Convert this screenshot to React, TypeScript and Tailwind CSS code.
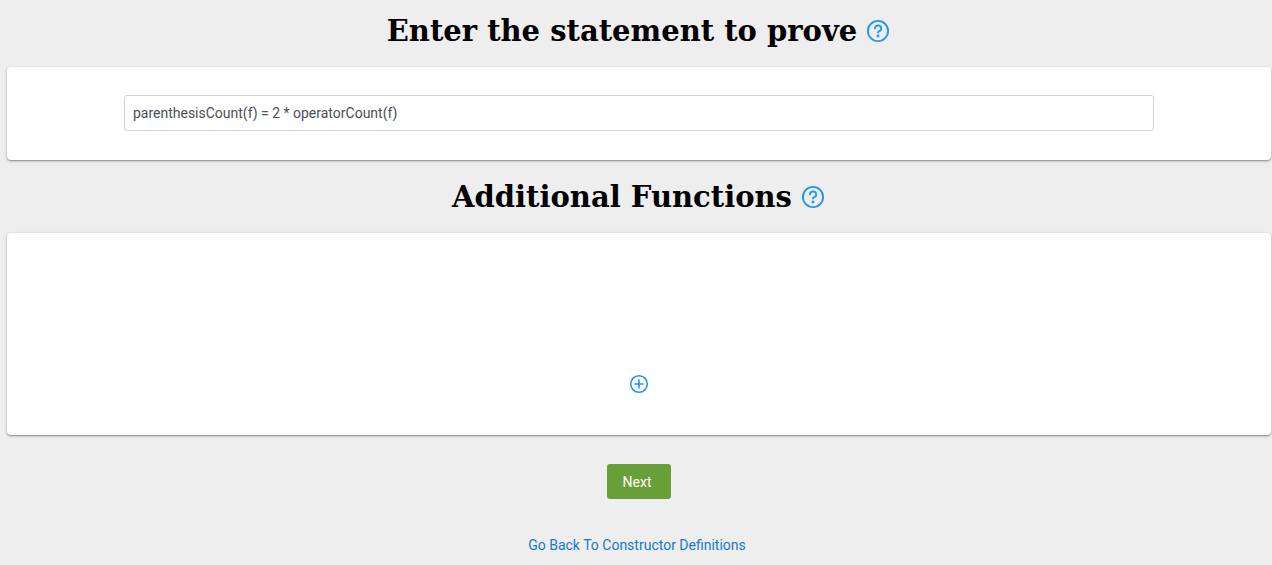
import { useState } from "react";

function HelpIcon() {
  return (
    <svg viewBox="0 0 26 26" className="size-[26px]" fill="none" stroke="#2196f3" strokeWidth="1.9" strokeLinecap="round" strokeLinejoin="round" aria-hidden="true">
      <circle cx="13" cy="13" r="10.1" />
      <path d="M10 10.400a3.100 2.900 0 1 1 4.300 2.700c-.9.400-1.300.8-1.300 1.500" />
      <circle cx="13" cy="18" r="1.400" fill="#2196f3" stroke="none" />
    </svg>
  );
}

function AddIcon() {
  return (
    <svg viewBox="0 0 22 22" className="size-[22px]" fill="none" stroke="#2196f3" strokeWidth="1.600" strokeLinecap="round" aria-hidden="true">
      <circle cx="11" cy="11" r="8.300" />
      <path d="M11 7v8M7 11h8" />
    </svg>
  );
}

function SectionHeading({ id, title }: { id: string; title: string }) {
  return (
    <div className="flex items-center justify-center gap-2">
      <h1 id={id} className="font-['DejaVu_Serif',serif] text-[29px] leading-9 font-bold text-black">
        {title}
      </h1>
      <button type="button" aria-label={`Help: ${title}`}>
        <HelpIcon />
      </button>
    </div>
  );
}

const card = "mt-[18px] flex justify-center rounded-sm bg-white shadow-[0_1px_3px_rgba(0,0,0,0.3),0_1px_1px_rgba(0,0,0,0.2)]";

export default function App() {
  const [statement, setStatement] = useState("parenthesisCount(f) = 2 * operatorCount(f)");
  return (
    <main className="min-h-screen bg-[#eeeeee] pt-[13px] pl-[7px] pr-px font-[Roboto,sans-serif] text-sm">
      <SectionHeading id="statement" title="Enter the statement to prove" />
      <section className={`${card} pt-7 pb-[29px]`}>
        <input
          aria-labelledby="statement"
          value={statement}
          onChange={(e) => setStatement(e.target.value)}
          className="h-9 w-[81.5%] rounded-[3px] border border-[#ced4da] bg-white px-2 text-[#495057]"
        />
      </section>
      <div className="mt-[19px]">
        <SectionHeading id="functions" title="Additional Functions" />
      </div>
      <section aria-labelledby="functions" className={`${card} pt-[140px] pb-10`}>
        <button type="button" aria-label="Add function">
          <AddIcon />
        </button>
      </section>
      <div className="flex flex-col items-center pt-[29px]">
        <button type="button" className="h-[35px] w-16 rounded-[3px] bg-[#689f38] pr-1 text-white">
          Next
        </button>
        <a href="#constructors" className="mt-9 pr-1 leading-5 text-[#1279d0]">
          Go Back To Constructor Definitions
        </a>
      </div>
    </main>
  );
}
